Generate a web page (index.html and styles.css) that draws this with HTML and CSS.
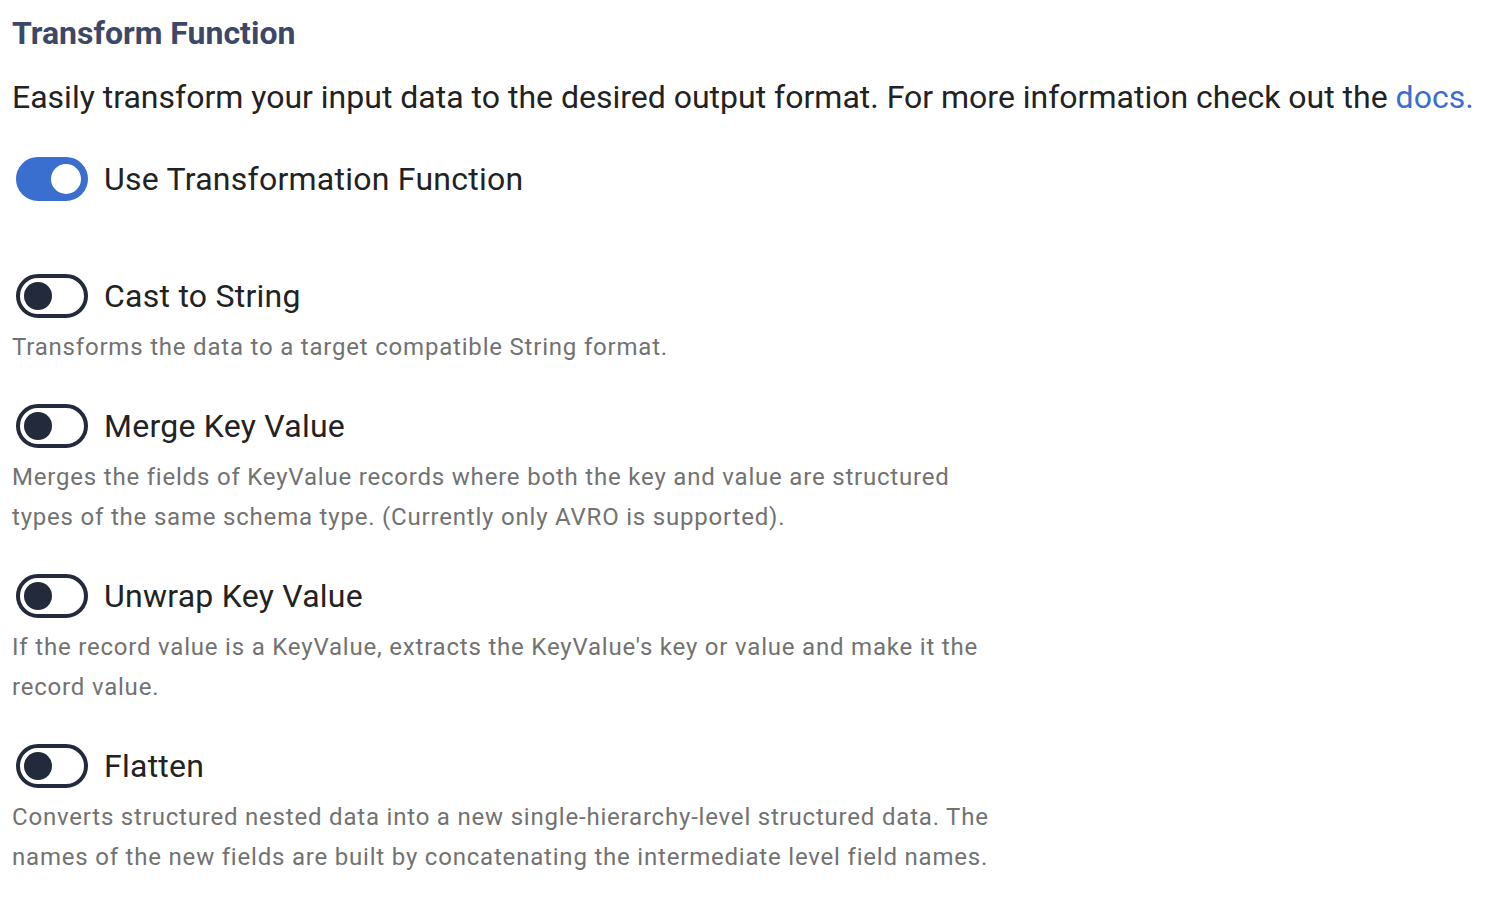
FILE: index.html
```html
<!DOCTYPE html>
<html lang="en">
<head>
<meta charset="utf-8">
<title>Transform Function</title>
<link rel="stylesheet" href="styles.css">
</head>
<body>
<main class="panel">
  <h2 class="title">Transform Function</h2>
  <p class="intro">Easily transform your input data to the desired output format. For more information check out the <a class="link" href="#">docs.</a></p>

  <div class="option option-main">
    <label class="row">
      <span class="toggle toggle-on"><span class="knob"></span></span>
      <span class="label">Use Transformation Function</span>
    </label>
  </div>

  <div class="option">
    <label class="row">
      <span class="toggle"><span class="knob"></span></span>
      <span class="label">Cast to String</span>
    </label>
    <p class="desc">Transforms the data to a target compatible String format.</p>
  </div>

  <div class="option">
    <label class="row">
      <span class="toggle"><span class="knob"></span></span>
      <span class="label">Merge Key Value</span>
    </label>
    <p class="desc">Merges the fields of KeyValue records where both the key and value are structured types of the same schema type. (Currently only AVRO is supported).</p>
  </div>

  <div class="option">
    <label class="row">
      <span class="toggle"><span class="knob"></span></span>
      <span class="label">Unwrap Key Value</span>
    </label>
    <p class="desc">If the record value is a KeyValue, extracts the KeyValue's key or value and make it the record value.</p>
  </div>

  <div class="option">
    <label class="row">
      <span class="toggle"><span class="knob"></span></span>
      <span class="label">Flatten</span>
    </label>
    <p class="desc">Converts structured nested data into a new single-hierarchy-level structured data. The names of the new fields are built by concatenating the intermediate level field names.</p>
  </div>
</main>
</body>
</html>
```

FILE: styles.css
```css
html, body {
  margin: 0;
  padding: 0;
  background: #ffffff;
}

body {
  font-family: Roboto, "Liberation Sans", sans-serif;
  color: #222222;
}

.panel {
  padding: 12px 12px 0 12px;
  display: flex;
  flex-direction: column;
}

.title {
  margin: 0;
  font-size: 32px;
  line-height: 42px;
  font-weight: 700;
  color: #3d4866;
}

.intro {
  margin: 21px 0 0 0;
  font-size: 32px;
  line-height: 44px;
  color: #222222;
}

.link {
  color: #3a6fcf;
  text-decoration: none;
}

.option {
  margin-top: 37px;
  display: flex;
  flex-direction: column;
}

.option-main {
  margin-top: 38px;
  margin-bottom: 36px;
}

.row {
  display: flex;
  align-items: center;
  gap: 16px;
  padding-left: 4px;
  height: 44px;
}

.toggle {
  box-sizing: border-box;
  width: 72px;
  height: 44px;
  border: 4px solid #222a3b;
  border-radius: 22px;
  display: flex;
  align-items: center;
  padding: 0 4px;
  flex: none;
}

.knob {
  width: 28px;
  height: 28px;
  border-radius: 50%;
  background: #222a3b;
}

.toggle-on {
  background: #3a6fcf;
  border-color: #3a6fcf;
  justify-content: flex-end;
  padding: 0 3px;
}

.toggle-on .knob {
  background: #ffffff;
  width: 30px;
  height: 30px;
}

.label {
  font-size: 32px;
  line-height: 44px;
  letter-spacing: 0.25px;
  color: #222222;
}

.desc {
  margin: 9px 0 0 0;
  max-width: 990px;
  font-size: 24px;
  line-height: 40px;
  letter-spacing: 0.8px;
  color: #727272;
}
```
